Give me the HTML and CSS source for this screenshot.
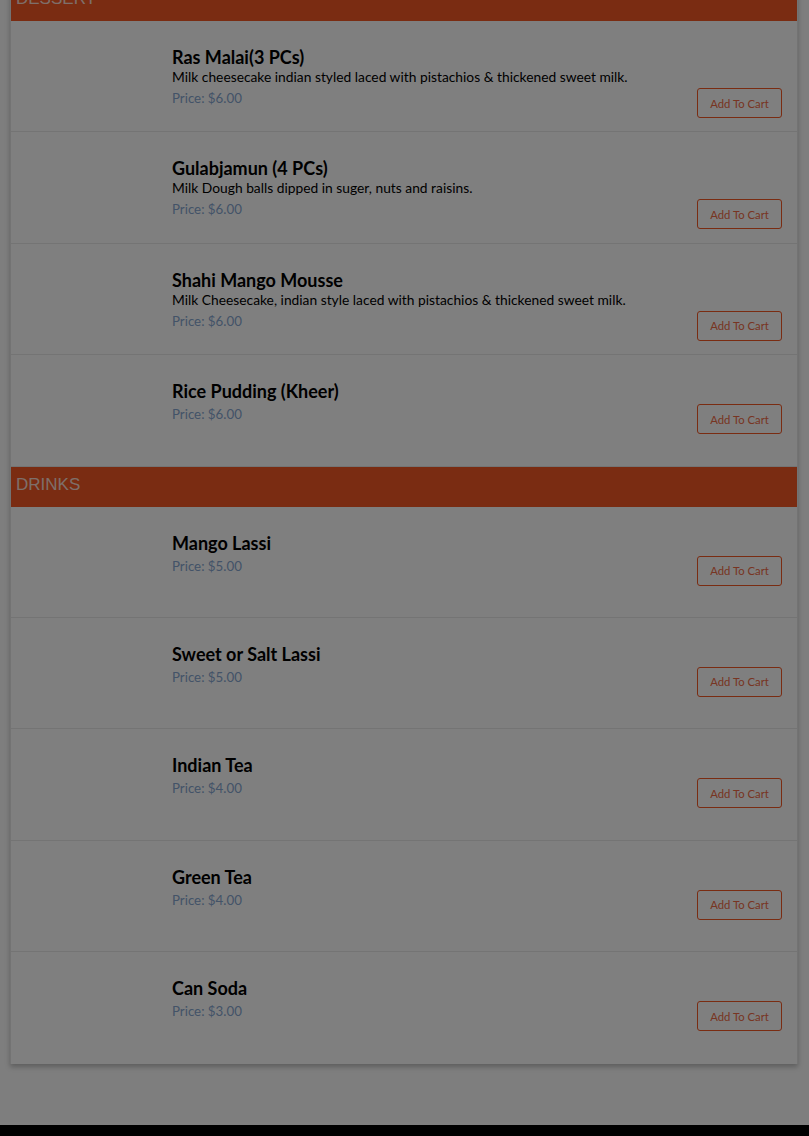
FILE: index.html
```html
<!DOCTYPE html>
<html lang="en">
<head>
<meta charset="utf-8">
<title>Menu</title>
<link rel="stylesheet" href="styles.css">
</head>
<body>
<main class="page">
  <section class="menu-card">
    <h2 class="cat-head">DESSERT</h2>
    <div class="item">
      <div class="thumb"></div>
      <div class="info">
        <h3 class="name">Ras Malai(3 PCs)</h3>
        <p class="desc">Milk cheesecake indian styled laced with pistachios &amp; thickened sweet milk.</p>
        <div class="price-row"><span class="price">Price: $6.00</span><button class="cart-btn">Add To Cart</button></div>
      </div>
    </div>
    <div class="item">
      <div class="thumb"></div>
      <div class="info">
        <h3 class="name">Gulabjamun (4 PCs)</h3>
        <p class="desc">Milk Dough balls dipped in suger, nuts and raisins.</p>
        <div class="price-row"><span class="price">Price: $6.00</span><button class="cart-btn">Add To Cart</button></div>
      </div>
    </div>
    <div class="item">
      <div class="thumb"></div>
      <div class="info">
        <h3 class="name">Shahi Mango Mousse</h3>
        <p class="desc">Milk Cheesecake, indian style laced with pistachios &amp; thickened sweet milk.</p>
        <div class="price-row"><span class="price">Price: $6.00</span><button class="cart-btn">Add To Cart</button></div>
      </div>
    </div>
    <div class="item">
      <div class="thumb"></div>
      <div class="info">
        <h3 class="name">Rice Pudding (Kheer)</h3>
        <div class="price-row"><span class="price">Price: $6.00</span><button class="cart-btn">Add To Cart</button></div>
      </div>
    </div>

    <h2 class="cat-head">DRINKS</h2>
    <div class="item">
      <div class="thumb"></div>
      <div class="info">
        <h3 class="name">Mango Lassi</h3>
        <div class="price-row"><span class="price">Price: $5.00</span><button class="cart-btn">Add To Cart</button></div>
      </div>
    </div>
    <div class="item">
      <div class="thumb"></div>
      <div class="info">
        <h3 class="name">Sweet or Salt Lassi</h3>
        <div class="price-row"><span class="price">Price: $5.00</span><button class="cart-btn">Add To Cart</button></div>
      </div>
    </div>
    <div class="item">
      <div class="thumb"></div>
      <div class="info">
        <h3 class="name">Indian Tea</h3>
        <div class="price-row"><span class="price">Price: $4.00</span><button class="cart-btn">Add To Cart</button></div>
      </div>
    </div>
    <div class="item">
      <div class="thumb"></div>
      <div class="info">
        <h3 class="name">Green Tea</h3>
        <div class="price-row"><span class="price">Price: $4.00</span><button class="cart-btn">Add To Cart</button></div>
      </div>
    </div>
    <div class="item last">
      <div class="thumb"></div>
      <div class="info">
        <h3 class="name">Can Soda</h3>
        <div class="price-row"><span class="price">Price: $3.00</span><button class="cart-btn">Add To Cart</button></div>
      </div>
    </div>
  </section>
</main>
<footer class="site-footer"></footer>
<div class="backdrop"></div>
</body>
</html>
```

FILE: styles.css
```css
html, body {
  margin: 0;
  padding: 0;
}
body {
  background: #fcfcfc;
  font-family: Lato, "Noto Sans", sans-serif;
  color: #000;
}
.page {
  padding: 0 11px 0 10px;
}
.menu-card {
  margin-top: -19px;
  margin-bottom: 58px;
  background: #fff;
  border-left: 1px solid #e6e6e6;
  border-right: 1px solid #e6e6e6;
  box-shadow: 0 3px 5px rgba(0, 0, 0, 0.25);
}
.cat-head {
  margin: 0;
  height: 40px;
  line-height: 35px;
  padding-left: 5px;
  background: #f45824;
  color: rgba(255, 255, 255, 0.82);
  font-family: "Liberation Sans", Arial, sans-serif;
  font-weight: normal;
  font-size: 17px;
}
.item {
  display: flex;
  box-sizing: border-box;
  height: 111.4px;
  padding: 25px 15px 0 0;
  border-bottom: 1px solid #e8e8e8;
}
.item.last {
  border-bottom: none;
}
.thumb {
  flex: 0 0 161px;
}
.info {
  flex: 1;
  display: flex;
  flex-direction: column;
}
.name {
  margin: 0 0 2px;
  font-size: 18px;
  line-height: 22px;
  font-weight: bold;
  color: #000;
}
.desc {
  margin: 0 0 4px;
  font-size: 13.8px;
  line-height: 14px;
  color: #000;
}
.price-row {
  display: flex;
  justify-content: space-between;
  align-items: flex-start;
}
.price {
  font-size: 13.3px;
  line-height: 20px;
  color: #86a6d0;
}
.cart-btn {
  box-sizing: border-box;
  width: 85px;
  height: 30px;
  padding: 0;
  background: transparent;
  border: 1px solid #f45824;
  border-radius: 3px;
  color: #f06a45;
  font-family: Lato, "Noto Sans", sans-serif;
  font-size: 11.3px;
  cursor: pointer;
}
.site-footer {
  border-top: 3px solid #fff;
  background: #000;
  height: 200px;
}
.backdrop {
  position: fixed;
  inset: 0;
  background: rgba(0, 0, 0, 0.5);
}
```
